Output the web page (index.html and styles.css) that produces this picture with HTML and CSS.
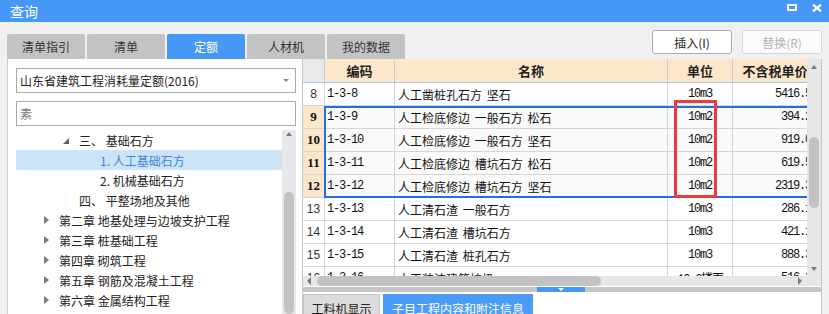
FILE: index.html
```html
<!doctype html>
<html lang="zh-CN">
  <head>
    <meta charset="UTF-8" />
    <meta name="viewport" content="width=device-width, initial-scale=1.0" />
    <title>查询</title>
    <link rel="stylesheet" href="styles.css">
  </head>
  <body>
    <div class="titlebar">
      <span class="title">查询</span>
      <div class="win-btns">
        <span class="btn-max"></span>
        <svg class="btn-close" width="10" height="8" viewBox="0 0 10 8">
          <path d="M1 0.6 L9 7.4 M9 0.6 L1 7.4" stroke="#fff" stroke-width="2.2" fill="none" />
        </svg>
      </div>
    </div>

    <div class="toolbar">
      <div class="tabs">
        <span class="tab">清单指引</span>
        <span class="tab">清单</span>
        <span class="tab active">定额</span>
        <span class="tab">人材机</span>
        <span class="tab">我的数据</span>
      </div>
      <div class="actions">
        <button class="btn">插入(I)</button>
        <button class="btn" disabled>替换(R)</button>
      </div>
    </div>

    <div class="content">
      <div class="left-panel">
        <div class="select">
          <span>山东省建筑工程消耗量定额(2016)</span>
          <i class="caret"></i>
        </div>
        <div class="search">素</div>
        <div class="tree-wrap">
          <ul class="tree">
            <li class="lv1"><i class="arrow open"></i>三、 基础石方</li>
            <li class="lv2 active">1. 人工基础石方</li>
            <li class="lv2">2. 机械基础石方</li>
            <li class="lv1 leaf">四、 平整场地及其他</li>
            <li class="lv0"><i class="arrow"></i>第二章 地基处理与边坡支护工程</li>
            <li class="lv0"><i class="arrow"></i>第三章 桩基础工程</li>
            <li class="lv0"><i class="arrow"></i>第四章 砌筑工程</li>
            <li class="lv0"><i class="arrow"></i>第五章 钢筋及混凝土工程</li>
            <li class="lv0"><i class="arrow"></i>第六章 金属结构工程</li>
          </ul>
          <div class="tree-scroll">
            <i class="up"></i>
            <span class="thumb"></span>
          </div>
        </div>
      </div>

      <div class="right-panel">
        <div class="grid-view">
          <div class="grid-body">
            <div class="row head">
              <span class="num"></span>
              <span>编码</span>
              <span>名称</span>
              <span>单位</span>
              <span>不含税单价</span>
            </div>
            <div class="row">
              <span class="num">8</span>
              <span class="code">1-3-8</span>
              <span class="name">人工凿桩孔石方 坚石</span>
              <span class="unit">10m3</span>
              <span class="price">5416.5</span>
            </div>
            <div class="row sel">
              <span class="num">9</span>
              <span class="code">1-3-9</span>
              <span class="name">人工检底修边 一般石方 松石</span>
              <span class="unit">10m2</span>
              <span class="price">394.2</span>
            </div>
            <div class="row sel">
              <span class="num">10</span>
              <span class="code">1-3-10</span>
              <span class="name">人工检底修边 一般石方 坚石</span>
              <span class="unit">10m2</span>
              <span class="price">919.0</span>
            </div>
            <div class="row sel">
              <span class="num">11</span>
              <span class="code">1-3-11</span>
              <span class="name">人工检底修边 槽坑石方 松石</span>
              <span class="unit">10m2</span>
              <span class="price">619.5</span>
            </div>
            <div class="row sel">
              <span class="num">12</span>
              <span class="code">1-3-12</span>
              <span class="name">人工检底修边 槽坑石方 坚石</span>
              <span class="unit">10m2</span>
              <span class="price">2319.3</span>
            </div>
            <div class="row">
              <span class="num">13</span>
              <span class="code">1-3-13</span>
              <span class="name">人工清石渣 一般石方</span>
              <span class="unit">10m3</span>
              <span class="price">286.1</span>
            </div>
            <div class="row">
              <span class="num">14</span>
              <span class="code">1-3-14</span>
              <span class="name">人工清石渣 槽坑石方</span>
              <span class="unit">10m3</span>
              <span class="price">421.1</span>
            </div>
            <div class="row">
              <span class="num">15</span>
              <span class="code">1-3-15</span>
              <span class="name">人工清石渣 桩孔石方</span>
              <span class="unit">10m3</span>
              <span class="price">888.3</span>
            </div>
            <div class="row">
              <span class="num">16</span>
              <span class="code">1-3-16</span>
              <span class="name">人工装渣建筑垃圾</span>
              <span class="unit">10m2楼面</span>
              <span class="price">516.2</span>
            </div>

            <div class="selection"></div>
            <div class="mark"></div>
          </div>
          <div class="grid-scroll">
            <i class="up"></i>
            <span class="thumb"></span>
            <i class="down"></i>
          </div>
        </div>
        <div class="hscroll">
          <i class="left"></i>
          <span class="thumb"></span>
          <i class="right"></i>
        </div>
        <div class="splitter"><span class="handle"></span></div>
        <div class="bottom-tabs">
          <span class="btab">工料机显示</span>
          <span class="btab active">子目工程内容和附注信息</span>
        </div>
      </div>
    </div>
  </body>
</html>
```

FILE: styles.css
```css
body {
  margin: 0;
  width: 829px;
  height: 314px;
  overflow: hidden;
  background: #f0f0f0;
  font-family: "Noto Sans CJK SC", sans-serif;
  font-size: 12px;
  color: #222;
}

/* title bar */
.titlebar {
  height: 22px;
  background: #4598f5;
  display: flex;
  align-items: center;
  padding: 0 7px 0 10px;
  color: #fff;
}
.title {
  font-size: 14px;
  line-height: 22px;
}
.win-btns {
  margin-left: auto;
  align-self: stretch;
  display: flex;
  align-items: flex-start;
  gap: 15px;
  padding-top: 4px;
}
.btn-max {
  width: 10px;
  height: 7px;
  box-sizing: border-box;
  border: 2px solid #fff;
}

/* tabs + buttons */
.toolbar {
  height: 37px;
  display: flex;
  padding: 0 7px;
}
.tabs {
  display: flex;
  gap: 2px;
  align-self: flex-end;
}
.tab {
  width: 78px;
  height: 25px;
  line-height: 25px;
  text-align: center;
  background: #c3c3c3;
  color: #333;
  border-radius: 2px 2px 0 0;
}
.tab.active {
  background: #4598f5;
  color: #fff;
}
.actions {
  margin-left: auto;
  margin-top: 8px;
  align-self: flex-start;
  display: flex;
  gap: 10px;
}
.btn {
  width: 80px;
  height: 24px;
  padding: 0;
  font-family: inherit;
  font-size: 12px;
  color: #222;
  background: #fff;
  border: 1px solid #acacac;
  border-radius: 3px;
}
.btn:disabled {
  color: #b4b4b4;
  background: #fcfcfc;
  border-color: #d6d6d6;
}

.content {
  display: flex;
  height: 255px;
}

/* left panel */
.left-panel {
  margin-left: 7px;
  width: 295px;
  box-sizing: border-box;
  background: #fff;
  border-left: 1px solid #cdcdcd;
  padding: 9px 6px 0 8px;
}
.select,
.search {
  height: 25px;
  box-sizing: border-box;
  border: 1px solid #a9a9a9;
  display: flex;
  align-items: center;
  padding: 0 6px 0 3px;
}
.select {
  justify-content: space-between;
  color: #2a1a1a;
}
.caret {
  border-top: 3px solid #8a8a8a;
  border-left: 3px solid transparent;
  border-right: 3px solid transparent;
}
.search {
  margin-top: 8px;
  color: #7a7a7a;
}
.tree-wrap {
  display: flex;
  margin-top: 4px;
  height: 184px;
}
.tree {
  list-style: none;
  margin: 0;
  padding: 0;
  flex: 1;
}
.tree li {
  height: 20px;
  display: flex;
  align-items: center;
  white-space: nowrap;
}
.tree .lv0 {
  padding-left: 28px;
}
.tree .lv1 {
  padding-left: 48px;
}
.tree .lv1.leaf {
  padding-left: 63px;
}
.tree .lv2 {
  padding-left: 84px;
}
.tree li.active {
  background: #cce4f7;
  color: #3f86dc;
}
.arrow {
  width: 15px;
  height: 20px;
  position: relative;
}
.arrow::before {
  content: "";
  position: absolute;
  left: 0;
  top: 6px;
  border-left: 5px solid #7a7a7a;
  border-top: 4px solid transparent;
  border-bottom: 4px solid transparent;
}
.arrow.open::before {
  left: -1px;
  top: 8px;
  border-left: 6px solid transparent;
  border-bottom: 6px solid #606060;
  border-top: 0;
}
.tree-scroll {
  width: 14px;
  background: #e8e8e8;
  display: flex;
  flex-direction: column;
  align-items: center;
  padding-top: 2px;
}
.up {
  border-bottom: 4px solid #7b7b7b;
  border-left: 3.5px solid transparent;
  border-right: 3.5px solid transparent;
}
.down {
  border-top: 4px solid #7b7b7b;
  border-left: 3.5px solid transparent;
  border-right: 3.5px solid transparent;
}
.tree-scroll .thumb {
  margin-top: 56px;
  width: 10px;
  height: 200px;
  border-radius: 5px;
  background: #c2c2c2;
}

/* grid */
.right-panel {
  width: 520px;
  box-sizing: border-box;
  border-left: 1px solid #c6c6c6;
  border-right: 1px solid #c6c6c6;
  background: #fff;
  display: flex;
  flex-direction: column;
}
.grid-view {
  display: flex;
  height: 217px;
}
.grid-body {
  width: 504px;
  overflow: hidden;
  position: relative;
}
.row {
  display: grid;
  grid-template-columns: 22px 70px 273px 65px 85px;
  width: 515px;
  height: 23px;
  box-sizing: border-box;
  border-bottom: 1px solid #d6d6d6;
}
.row > span {
  border-right: 1px solid #d6d6d6;
  display: flex;
  align-items: center;
  white-space: nowrap;
  overflow: hidden;
}
.row.head {
  height: 24px;
  border-bottom-color: #a9c8ec;
  background: #fde7ca;
  font-size: 13px;
  font-weight: bold;
}
.row.head > span {
  justify-content: center;
  border-right-color: #cbcbcb;
}
.row.head .num {
  background: #e9e9e9;
}
.row.sel {
  background: #fafafa;
}
.num {
  justify-content: center;
  font-family: "Liberation Sans", sans-serif;
  font-size: 12px;
  color: #333;
}
.row.sel .num {
  background: #fde7ca;
  font-family: "Liberation Serif", serif;
  font-weight: bold;
  font-size: 13px;
  color: #111;
}
.code,
.unit,
.price {
  font-family: "Liberation Mono", monospace;
  font-size: 12px;
  letter-spacing: -1.2px;
  color: #111;
}
.code {
  padding-left: 2px;
}
.name {
  padding-left: 3px;
  word-spacing: 2px;
  color: #111;
}
.unit {
  justify-content: center;
}
.price {
  justify-content: flex-end;
  padding-right: 6px;
}
.selection {
  position: absolute;
  left: 21px;
  top: 47px;
  width: 600px;
  height: 92px;
  box-sizing: border-box;
  border: 2px solid #1f6fe5;
}
.mark {
  position: absolute;
  left: 371px;
  top: 41px;
  width: 43px;
  height: 98px;
  box-sizing: border-box;
  border: 3px solid #f03a3a;
}
.grid-scroll {
  width: 14px;
  background: #e7e7e7;
  display: flex;
  flex-direction: column;
  align-items: center;
  padding: 6px 0 5px;
  box-sizing: border-box;
}
.grid-scroll .thumb {
  margin-top: 68px;
  width: 10px;
  height: 71px;
  border-radius: 5px;
  background: #c2c2c2;
}
.grid-scroll .down {
  margin-top: auto;
}
.hscroll {
  height: 14px;
  background: #e7e7e7;
  display: flex;
  align-items: center;
}
.hscroll .left {
  margin-left: 4px;
  border-right: 4px solid #7b7b7b;
  border-top: 4px solid transparent;
  border-bottom: 4px solid transparent;
}
.hscroll .thumb {
  margin-left: 6px;
  width: 284px;
  height: 10px;
  border-radius: 5px;
  background: #c2c2c2;
}
.hscroll .right {
  margin-left: auto;
  margin-right: 19px;
  border-left: 4px solid #7b7b7b;
  border-top: 4px solid transparent;
  border-bottom: 4px solid transparent;
}
.splitter {
  height: 6px;
  box-sizing: border-box;
  border-top: 1px solid #fff;
  background: #c5c5c5;
}
.handle {
  display: flex;
  justify-content: center;
  align-items: center;
  margin-left: 234px;
  width: 48px;
  height: 5px;
  background: #4598f5;
}
.handle::before {
  content: "";
  border-top: 3px solid #fff;
  border-left: 3px solid transparent;
  border-right: 3px solid transparent;
}
.bottom-tabs {
  display: flex;
  gap: 3px;
  padding-top: 2px;
}
.btab {
  width: 77px;
  height: 28px;
  box-sizing: border-box;
  padding-top: 5px;
  line-height: 18px;
  text-align: center;
  background: #dcdcdc;
  border: 1px solid #c4c4c4;
  border-bottom: 0;
  color: #222;
}
.btab.active {
  width: 150px;
  background: #4b9cf6;
  border-color: #4b9cf6;
  color: #fff;
}
```
